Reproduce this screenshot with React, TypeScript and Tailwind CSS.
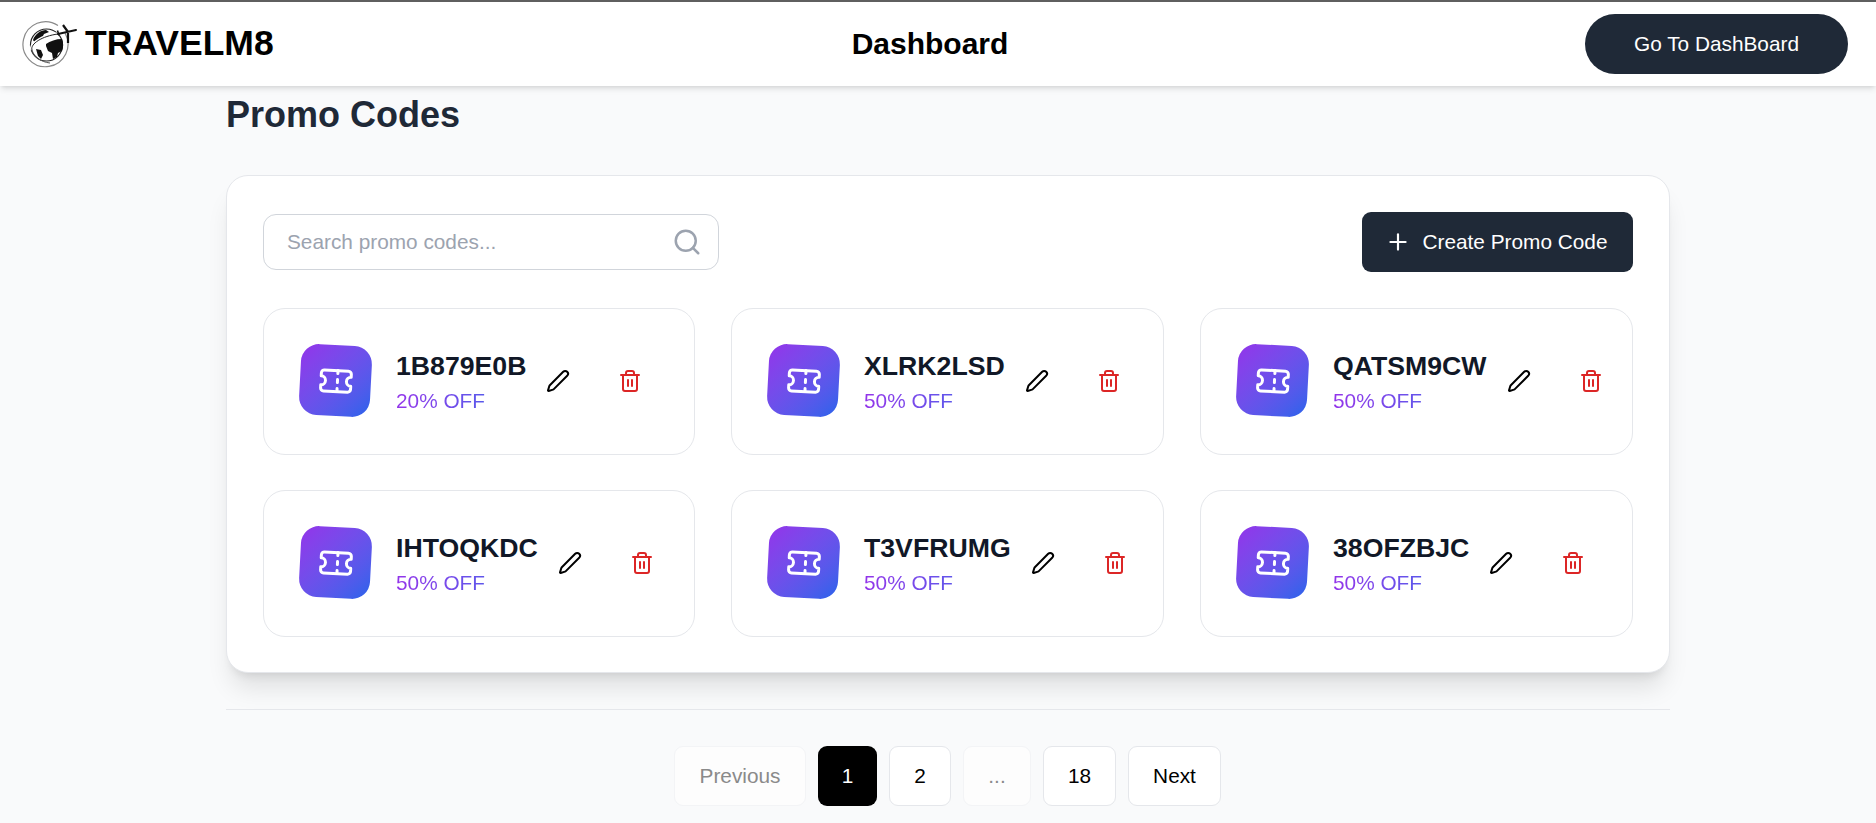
import { Pen, Plus, Search, Ticket, Trash2 } from "lucide-react";

const promos = [
  { code: "1B879E0B", off: "20% OFF" },
  { code: "XLRK2LSD", off: "50% OFF" },
  { code: "QATSM9CW", off: "50% OFF" },
  { code: "IHTOQKDC", off: "50% OFF" },
  { code: "T3VFRUMG", off: "50% OFF" },
  { code: "38OFZBJC", off: "50% OFF" },
];

function Logo() {
  return (
    <svg width="56" height="50" viewBox="0 0 56 50" className="shrink-0">
      {/* anillo */}
      <path d="M36 6.500A22.500 22.500 0 1 0 43 14" fill="none" stroke="#8a8a8a" strokeWidth="1.2" />
      {/* globo */}
      <circle cx="24.500" cy="26" r="16" fill="#fff" stroke="#222" strokeWidth="1.2" />
      <path d="M11 21c2-6 8-10 13-10l3 2-5 2-2 4-4 1-1 3-2 1z" fill="#111" />
      <path d="M24 25c4-3 10-5 16-5 1.500 4 1.500 8 0 12l-4 2-1 4-4 2-1-6-4-2-2-5z" fill="#111" />
      <path d="M14 30l5 1 2 5-2 4-3-3z" fill="#111" />
      {/* estela */}
      <path d="M10 31C8 25 20 17 36 15" fill="none" stroke="#fff" strokeWidth="3.500" />
      <path d="M10 31C8 25 20 17 36 15" fill="none" stroke="#222" strokeWidth="1" />
      <path d="M10 31c2 7 9 12 18 13" fill="none" stroke="#555" strokeWidth="1" />
      {/* avion */}
      <path d="M36 15l18-4" stroke="#111" strokeWidth="2" strokeLinecap="round" />
      <path d="M41 6l5 7M46 14v10" stroke="#111" strokeWidth="2.200" />
      <path d="M35.500 11.500l1.500 5" stroke="#111" strokeWidth="1.500" />
    </svg>
  );
}

function PromoCard({ code, off }: { code: string; off: string }) {
  return (
    <div className="h-[147px] flex items-center pl-[36px] pb-[2px] bg-white border border-[#e5e7eb] rounded-[22px]">
      <div className="w-[71px] h-[71px] rounded-[18px] rotate-3 bg-gradient-to-br from-[#9333ea] to-[#2563eb] flex items-center justify-center shrink-0">
        <Ticket size={36} strokeWidth={2} color="white" />
      </div>
      <div className="ml-[25px] mt-[2px]">
        <div className="text-[26.67px] leading-[34px] font-bold text-[#111827]">{code}</div>
        <div className="text-[20.800px] leading-[28px] mt-[4px] bg-gradient-to-r from-[#9333ea] to-[#2563eb] bg-clip-text text-transparent">
          {off}
        </div>
      </div>
      <Pen size={24} strokeWidth={2} className="ml-[20px] text-black shrink-0" />
      <Trash2 size={24} strokeWidth={2} className="ml-[48px] text-[#dc2626] shrink-0" />
    </div>
  );
}

export default function App() {
  return (
    <div className="h-[823px] overflow-hidden bg-[#f9fafb] font-['Liberation_Sans',Arial,sans-serif]">
      {/* Barra superior */}
      <header className="relative h-[86px] bg-white border-t-2 border-[#5f5f5f] shadow-md flex items-center justify-between pl-[22px] pr-[28px]">
        <div className="flex items-center gap-[7px] w-[370px]">
          <Logo />
          <span className="text-[35.500px] font-bold text-black">TRAVELM8</span>
        </div>
        <h1 className="text-[30px] font-bold text-black -mt-[2px]">Dashboard</h1>
        <div className="w-[380px] flex justify-end">
          <button className="h-[60px] w-[263px] rounded-full bg-[#1f2937] text-white text-[20.800px]">
            Go To DashBoard
          </button>
        </div>
      </header>

      <main className="pl-[226px] pr-[206px]">
        <h2 className="h-[57px] pt-[1px] leading-[56px] text-[36px] font-bold text-[#1f2937]">Promo Codes</h2>

        <section className="mt-[32px] h-[498px] bg-white border border-[#e5e7eb] rounded-[22px] shadow-xl pt-[36px] px-[36px]">
          <div className="flex items-center justify-between h-[60px] mb-[36px]">
            <div className="w-[456px] h-[56px] flex items-center justify-between pl-[23px] pr-[16px] border border-[#d1d5db] rounded-[13px]">
              <span className="text-[20.800px] text-[#9ca3af]">Search promo codes...</span>
              <Search size={30} strokeWidth={2} className="text-[#9ca3af]" />
            </div>
            <button className="w-[271px] h-[60px] pr-[3px] rounded-[9px] bg-[#1f2937] text-white text-[20.800px] flex items-center justify-center gap-[12px]">
              <Plus size={26} strokeWidth={2} />
              Create Promo Code
            </button>
          </div>

          <div className="grid grid-cols-[432px_433px_1fr] gap-x-[36px] gap-y-[35px]">
            {promos.map((p) => (
              <PromoCard key={p.code} code={p.code} off={p.off} />
            ))}
          </div>
        </section>

        <div className="mt-[36px] border-t border-[#e5e7eb]" />

        <nav className="mt-[36px] ml-[448px] flex items-center gap-[12px] text-[20.800px]">
          <button className="w-[132px] h-[60px] rounded-[9px] bg-white/60 border border-[#f3f4f6] text-[#8a8a8a]">
            Previous
          </button>
          <button className="w-[59px] h-[60px] rounded-[9px] bg-black text-white">1</button>
          <button className="w-[62px] h-[60px] rounded-[9px] bg-white border border-[#e5e7eb] text-black">2</button>
          <button className="w-[68px] h-[60px] rounded-[9px] bg-white/60 border border-[#f3f4f6] text-[#8a8a8a]">
            ...
          </button>
          <button className="w-[73px] h-[60px] rounded-[9px] bg-white border border-[#e5e7eb] text-black">18</button>
          <button className="w-[93px] h-[60px] rounded-[9px] bg-white border border-[#e5e7eb] text-black">Next</button>
        </nav>
      </main>
    </div>
  );
}
